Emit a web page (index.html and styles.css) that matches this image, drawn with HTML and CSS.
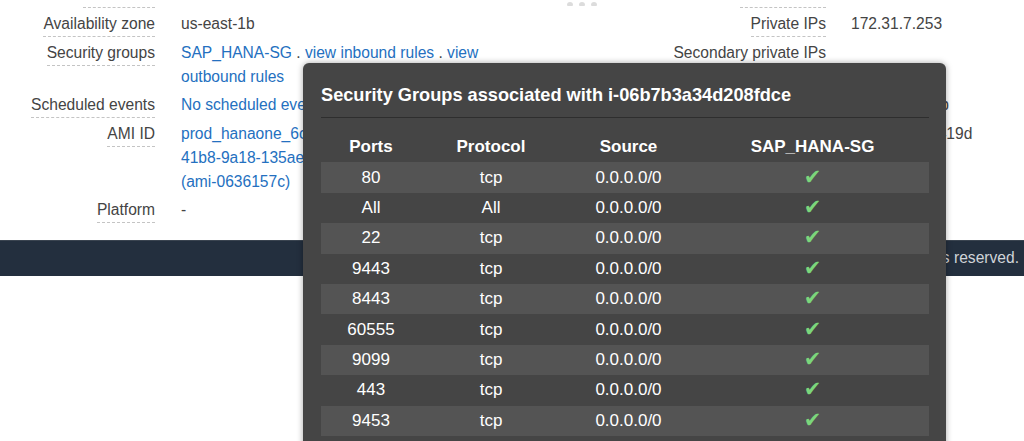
FILE: index.html
```html
<!DOCTYPE html>
<html lang="en">
<head>
<meta charset="utf-8">
<title>Instance description</title>
<link rel="stylesheet" href="styles.css">
</head>
<body>
<div class="page">
  <div class="handle"><span></span><span></span><span></span></div>

  <div class="details">
    <div class="label-prev"><span class="dash dash-a"></span></div>
    <div class="value-prev"></div>
    <div class="label-prev"><span class="dash dash-b"></span></div>
    <div class="value-prev"></div>

    <div class="label"><span>Availability zone</span></div>
    <div class="value">us-east-1b</div>
    <div class="label"><span>Private IPs</span></div>
    <div class="value value-r">172.31.7.253</div>

    <div class="label"><span>Security groups</span></div>
    <div class="value"><a class="link">SAP_HANA-SG</a> . <a class="link">view inbound rules</a> . <a class="link">view outbound rules</a></div>
    <div class="label"><span>Secondary private IPs</span></div>
    <div class="value value-r"></div>

    <div class="label"><span>Scheduled events</span></div>
    <div class="value"><a class="link">No scheduled events</a></div>
    <div class="label"><span>VPC ID</span></div>
    <div class="value value-r">vpc-3c9aa45b</div>

    <div class="label"><span>AMI ID</span></div>
    <div class="value"><a class="link">prod_hanaone_6c2e1a07-dd3f-<br>41b8-9a18-135ae5c0f7d2-ami-<br>(ami-0636157c)</a></div>
    <div class="label"><span>Subnet ID</span></div>
    <div class="value value-r">subnet-5d0b419d</div>

    <div class="label"><span>Platform</span></div>
    <div class="value">-</div>
    <div class="label"><span>Network interfaces</span></div>
    <div class="value value-r">eth0</div>
  </div>

  <footer class="footer">© 2008 - 2018, Amazon Web Services, Inc. or its affiliates. All rights reserved.</footer>

  <div class="popup">
    <h2 class="popup-title">Security Groups associated with i-06b7b3a34d208fdce</h2>
    <table class="rules">
      <thead>
        <tr><th class="c-port">Ports</th><th class="c-proto">Protocol</th><th class="c-src">Source</th><th class="c-sg">SAP_HANA-SG</th></tr>
      </thead>
      <tbody>
        <tr><td>80</td><td>tcp</td><td>0.0.0.0/0</td><td><span class="ok">✔</span></td></tr>
        <tr><td>All</td><td>All</td><td>0.0.0.0/0</td><td><span class="ok">✔</span></td></tr>
        <tr><td>22</td><td>tcp</td><td>0.0.0.0/0</td><td><span class="ok">✔</span></td></tr>
        <tr><td>9443</td><td>tcp</td><td>0.0.0.0/0</td><td><span class="ok">✔</span></td></tr>
        <tr><td>8443</td><td>tcp</td><td>0.0.0.0/0</td><td><span class="ok">✔</span></td></tr>
        <tr><td>60555</td><td>tcp</td><td>0.0.0.0/0</td><td><span class="ok">✔</span></td></tr>
        <tr><td>9099</td><td>tcp</td><td>0.0.0.0/0</td><td><span class="ok">✔</span></td></tr>
        <tr><td>443</td><td>tcp</td><td>0.0.0.0/0</td><td><span class="ok">✔</span></td></tr>
        <tr><td>9453</td><td>tcp</td><td>0.0.0.0/0</td><td><span class="ok">✔</span></td></tr>
      </tbody>
    </table>
  </div>
</div>
</body>
</html>
```

FILE: styles.css
```css
* { box-sizing: border-box; }

html, body {
  margin: 0;
  padding: 0;
  background: #ffffff;
}

body {
  font-family: "Liberation Sans", Arial, Helvetica, sans-serif;
  font-size: 15.6px;
  color: #444444;
  overflow: hidden;
  height: 441px;
}

.page {
  position: relative;
  width: 1024px;
  height: 441px;
  overflow: hidden;
}

/* drag handle */
.handle {
  display: flex;
  justify-content: center;
  gap: 6px;
  padding: 2px 0 0 140px;
  height: 7px;
}
.handle span {
  display: block;
  width: 6px;
  height: 4px;
  border-radius: 3px 3px 1px 1px;
  background: #dcdcdc;
}

/* details grid */
.details {
  display: grid;
  grid-template-columns: 155px 346px 325px 1fr;
  row-gap: 4px;
  line-height: 24px;
}

.label-prev,
.value-prev {
  height: 1px;
  line-height: 1px;
  display: flex;
  justify-content: flex-end;
}
.dash {
  display: block;
  height: 1px;
  border-top: 1px dashed #c4c4c4;
}
.dash-a { width: 72px; }
.dash-b { width: 86px; }

.label {
  text-align: right;
  color: #444444;
}
.label span {
  display: inline-block;
  border-bottom: 1px dashed #c4c4c4;
  white-space: nowrap;
}

.value {
  padding-left: 26px;
  color: #444444;
}
.value-r {
  padding-left: 25px;
  white-space: nowrap;
}

.link {
  color: #2470c0;
  text-decoration: none;
}

/* footer */
.footer {
  margin-top: 17px;
  height: 36px;
  background: #232f3e;
  border-top: 1px solid #3a4450;
  color: #d0d4d8;
  text-align: right;
  padding-right: 5px;
  line-height: 34px;
  white-space: nowrap;
}

/* popup */
.popup {
  position: absolute;
  left: 303px;
  top: 63px;
  width: 643px;
  height: 400px;
  background: #454545;
  border-radius: 6px;
  box-shadow: 0 0 6px rgba(0, 0, 0, 0.35);
  padding: 21px 17px 0 18px;
  color: #ffffff;
}

.popup-title {
  margin: 0;
  font-size: 18.2px;
  font-weight: bold;
  line-height: 22px;
  padding-bottom: 11px;
  border-bottom: 1px solid #2e2e2e;
}

.rules {
  margin-top: 14px;
  width: 608px;
  border-collapse: collapse;
  table-layout: fixed;
  font-size: 17px;
}
.rules th,
.rules td {
  height: 30.4px;
  padding: 0;
  text-align: center;
  vertical-align: middle;
}
.rules th { font-weight: bold; }
.c-port { width: 100px; }
.c-proto { width: 140px; }
.c-src { width: 135px; }

.rules tbody tr:nth-child(odd) {
  background: #545454;
}

.ok {
  font-family: "DejaVu Sans", sans-serif;
  font-size: 21px;
  line-height: 20px;
  color: #7bd67b;
}
```
